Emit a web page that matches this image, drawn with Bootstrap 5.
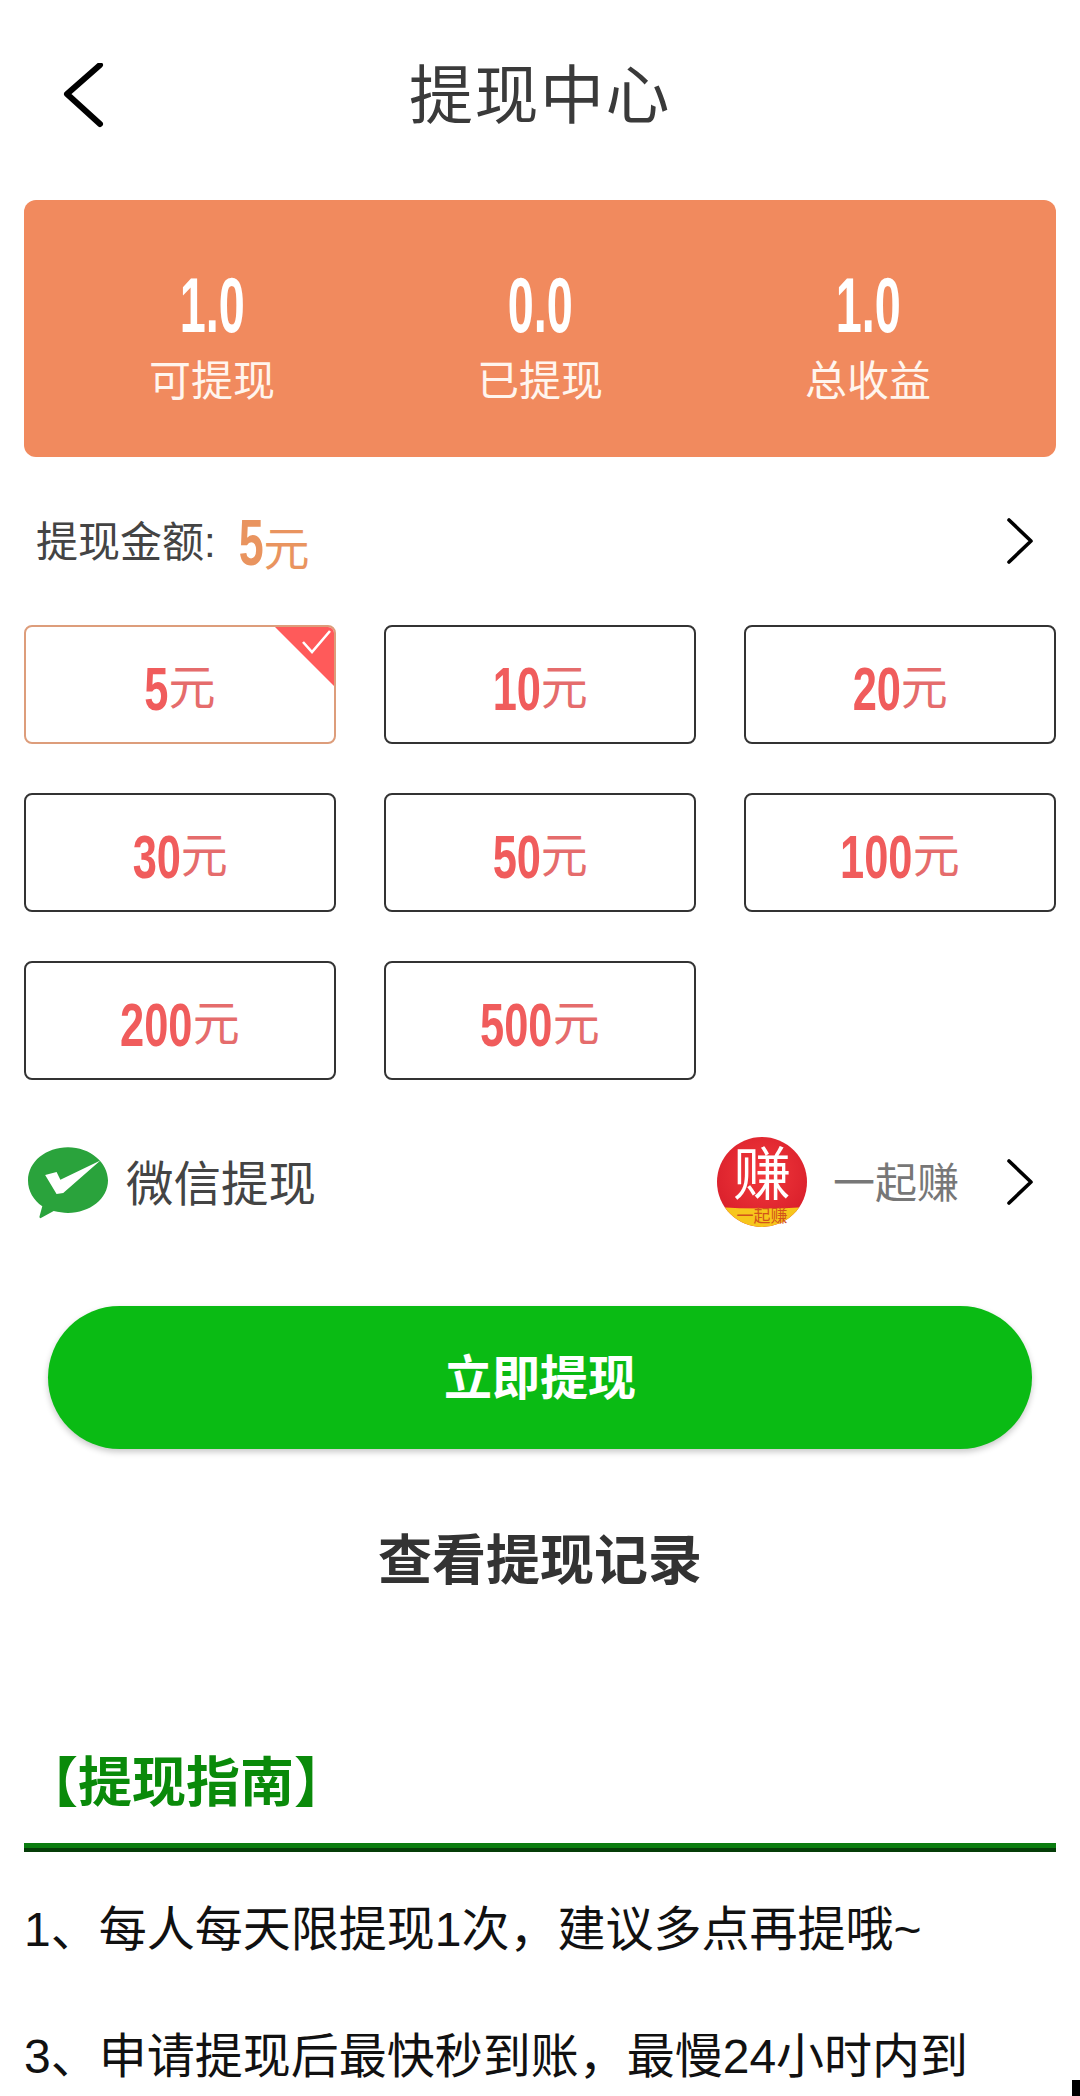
<!doctype html>
<html lang="zh-CN">
<head>
<meta charset="utf-8">
<title>提现中心</title>
<link href="https://cdn.jsdelivr.net/npm/bootstrap@5.3.0/dist/css/bootstrap.min.css" rel="stylesheet">
<style>
html,body{height:2096px;overflow:hidden;background:#fff}
body{font-family:"Liberation Sans","Noto Sans CJK SC",sans-serif;color:#333}
.page-wrap{padding:0 24px;position:relative;height:2096px}
.top-bar{height:200px;display:grid;grid-template-columns:1fr auto 1fr;align-items:center;padding-bottom:8px}
.top-title{font-size:64px;line-height:1;color:#3a3a3a;letter-spacing:1.5px}
.back-ico{width:44px;height:66px;margin-left:39px;display:block}
.sum-card{height:257px;background:#f18a5e;border-radius:12px;color:#fff;padding:66px 56px 0}
.sum-item{width:264px;text-align:center}
.cond{display:inline-block;font-weight:700;transform:scaleX(.7);transform-origin:right center}
.n1{margin-left:-.1668em}.n2{margin-left:-.3336em}.n3{margin-left:-.5004em}
.sum-num{font-size:78px;line-height:78px;height:78px;white-space:nowrap}
.sum-num .cond{transform:scaleX(.6);transform-origin:center}
.sum-lab{font-size:42px;line-height:48px;margin-top:14px;color:#fff5ee}
.amt-row{height:168px;padding:0 21px 0 12px}
.amt-lab{font-size:42px;color:#444;margin-right:23px;padding-top:2px}
.amt-val{font-size:46px;color:#e9945f;white-space:nowrap;line-height:1;padding-top:4px}
.amt-val .cond{font-size:64px}
.chev{width:30px;height:48px;display:block}
.amt-grid{display:grid;grid-template-columns:repeat(3,312px);column-gap:48px;row-gap:49px}
.amt-btn{height:119px;border:2px solid #333;border-radius:8px;background:#fff;color:#f05c5c;position:relative;overflow:hidden;font-size:47px;white-space:nowrap;padding:8px 0 0}
.amt-btn .yuan{color:#e56c6c}
.amt-btn .cond{font-size:62px;line-height:1}
.amt-btn.sel{border-color:#dd9d7b}
.corner{position:absolute;top:-2px;right:-2px;width:63px;height:63px;display:block}
.pay-row{height:96px;margin-top:54px;padding:0 21px 0 4px}
.pay-lab{font-size:47.5px;color:#444;margin-left:18px;padding-top:6px}
.pay-name{font-size:42px;color:#777;margin:0 46px 0 26px;padding-top:2px}
.wx-ico{width:80px;height:73px;display:block}
.logo-ico{width:90px;height:90px;display:block}
.go-btn{height:143px;margin:76px 24px 0;padding-top:3px;border-radius:72px;background:#0abb14;color:#fff;font-size:48px;font-weight:700;box-shadow:0 3px 6px rgba(0,0,0,.22)}
.rec-link{height:80px;margin-top:72px;font-size:54px;font-weight:700;color:#333}
.guide-head{height:80px;margin-top:142px;font-size:54px;line-height:80px;font-weight:700;color:#0a8a0a}
.guide-rule{height:9px;margin-top:20px;background:linear-gradient(#0b7d10 0 5px,#053d08 5px 9px)}
.guide-text{margin:14px 0 0;font-size:48px;line-height:127px;color:#111;white-space:nowrap}
.edge-mark{position:absolute;right:0;bottom:0;width:8px;height:16px;background:#000}
</style>
</head>
<body>
<div class="page-wrap">
  <div class="top-bar">
    <svg class="back-ico" viewBox="0 0 44 66"><path d="M37 2 4 31 37 61" fill="none" stroke="#000" stroke-width="6" stroke-linecap="round" stroke-linejoin="round"/></svg>
    <div class="top-title">提现中心</div>
    <div></div>
  </div>

  <div class="sum-card d-flex justify-content-between align-items-start">
    <div class="sum-item"><div class="sum-num"><span class="cond">1.0</span></div><div class="sum-lab">可提现</div></div>
    <div class="sum-item"><div class="sum-num"><span class="cond">0.0</span></div><div class="sum-lab">已提现</div></div>
    <div class="sum-item"><div class="sum-num"><span class="cond">1.0</span></div><div class="sum-lab">总收益</div></div>
  </div>

  <div class="amt-row d-flex align-items-center">
    <span class="amt-lab">提现金额:</span>
    <span class="amt-val"><span class="cond n1">5</span>元</span>
    <svg class="chev ms-auto" viewBox="0 0 30 48"><path d="M4 3 26 24 4 45" fill="none" stroke="#000" stroke-width="3.6" stroke-linecap="round" stroke-linejoin="round"/></svg>
  </div>

  <div class="amt-grid">
    <div class="amt-btn sel d-flex align-items-center justify-content-center">
      <span class="cond n1">5</span><span class="yuan">元</span>
      <svg class="corner" viewBox="0 0 63 63"><path d="M0 0H57a6 6 0 0 1 6 6V63Z" fill="#ff5a5a"/><path d="M30 17 39 27 57 6" fill="none" stroke="#fff" stroke-width="2.6"/></svg>
    </div>
    <div class="amt-btn d-flex align-items-center justify-content-center"><span class="cond n2">10</span><span class="yuan">元</span></div>
    <div class="amt-btn d-flex align-items-center justify-content-center"><span class="cond n2">20</span><span class="yuan">元</span></div>
    <div class="amt-btn d-flex align-items-center justify-content-center"><span class="cond n2">30</span><span class="yuan">元</span></div>
    <div class="amt-btn d-flex align-items-center justify-content-center"><span class="cond n2">50</span><span class="yuan">元</span></div>
    <div class="amt-btn d-flex align-items-center justify-content-center"><span class="cond n3">100</span><span class="yuan">元</span></div>
    <div class="amt-btn d-flex align-items-center justify-content-center"><span class="cond n3">200</span><span class="yuan">元</span></div>
    <div class="amt-btn d-flex align-items-center justify-content-center"><span class="cond n3">500</span><span class="yuan">元</span></div>
  </div>

  <div class="pay-row d-flex align-items-center">
    <svg class="wx-ico" viewBox="0 0 84 76">
      <path d="M42 1C19 1 0 16 0 36c0 11 6 21 15 27l-3 11c0 1 1 2 2 1l13-7c5 1 10 2 15 2 23 0 42-15 42-34S65 1 42 1Z" fill="#2aa33c"/>
      <path d="M18 30 30 27 34 35 76 15 37 49 30 50Z" fill="#fff"/>
    </svg>
    <span class="pay-lab">微信提现</span>
    <svg class="logo-ico ms-auto" viewBox="0 0 90 90">
      <defs>
        <clipPath id="lc"><circle cx="45" cy="45" r="45"/></clipPath>
        <radialGradient id="lr" cx=".5" cy=".4" r=".6"><stop offset="0" stop-color="#f2393c"/><stop offset="1" stop-color="#d91f2b"/></radialGradient>
      </defs>
      <circle cx="45" cy="45" r="45" fill="url(#lr)"/>
      <path d="M0 70Q45 73 90 70V90H0Z" fill="#f7c61c" clip-path="url(#lc)"/>
      <text x="45" y="58" font-size="58" text-anchor="middle" fill="#fff" font-family="Noto Sans CJK SC">赚</text>
      <text x="45" y="85" font-size="17" text-anchor="middle" fill="#d2541a" font-family="Noto Sans CJK SC">一起赚</text>
    </svg>
    <span class="pay-name">一起赚</span>
    <svg class="chev" viewBox="0 0 30 48"><path d="M4 3 26 24 4 45" fill="none" stroke="#000" stroke-width="3.6" stroke-linecap="round" stroke-linejoin="round"/></svg>
  </div>

  <div class="go-btn d-flex align-items-center justify-content-center">立即提现</div>
  <div class="rec-link d-flex align-items-center justify-content-center">查看提现记录</div>

  <div class="guide-head">【提现指南】</div>
  <div class="guide-rule"></div>
  <p class="guide-text">1、每人每天限提现1次&#xFF0C;建议多点再提哦~<br>3、申请提现后最快秒到账&#xFF0C;最慢24小时内到</p>
  <div class="edge-mark"></div>
</div>
<script src="https://cdn.jsdelivr.net/npm/bootstrap@5.3.0/dist/js/bootstrap.bundle.min.js"></script>
</body>
</html>
